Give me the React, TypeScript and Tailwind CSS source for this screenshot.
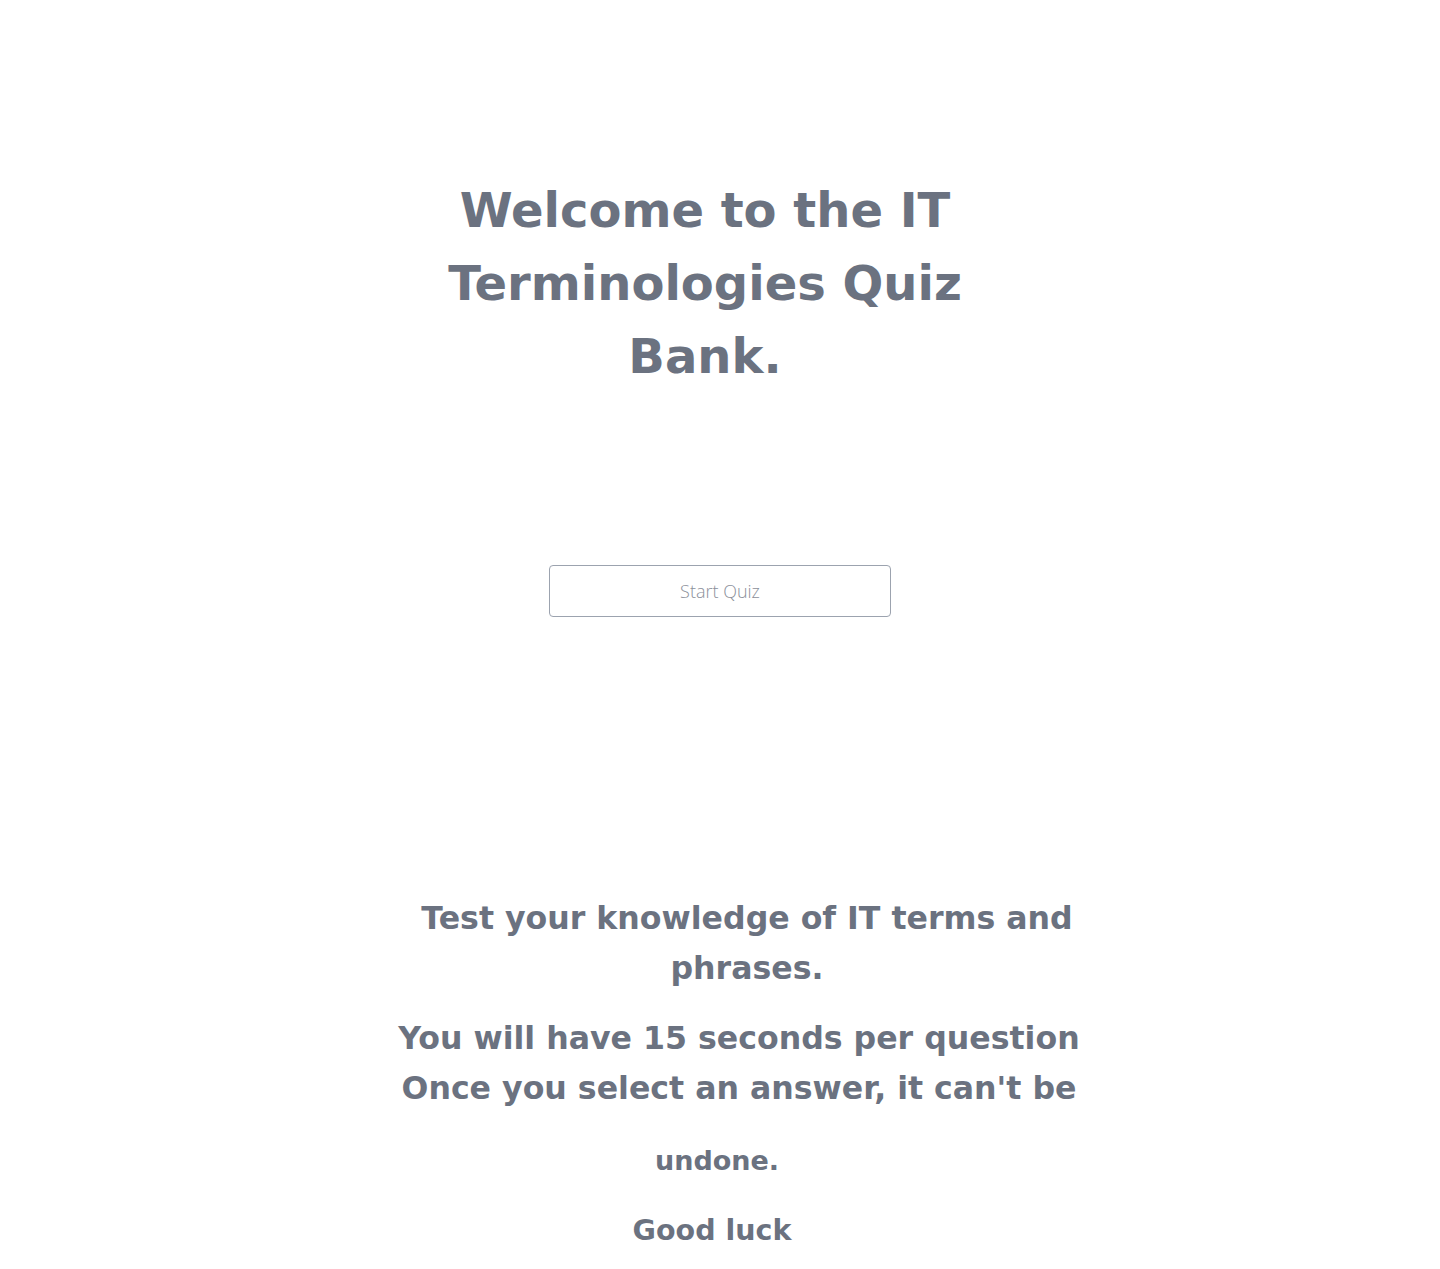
export default function App() {
  return (
    <div className="min-h-[1269px] w-full bg-white flex flex-col items-center text-[#6b7280] [font-family:'DejaVu_Sans',sans-serif]">
      <h1 className="mt-[174px] w-[540px] text-center text-[48px] leading-[73px] font-bold ml-[-30px]">
        Welcome to the IT Terminologies Quiz Bank.
      </h1>

      <button className="mt-[172px] w-[342px] h-[52px] border border-[#9ca3af] rounded-[4px] bg-white text-[18px] text-[#8b8f9a] font-light [font-family:'Open_Sans',sans-serif]">
        Start Quiz
      </button>

      <div className="mt-[276px] flex flex-col items-center font-bold text-[31.6px]">
        <p className="w-[700px] text-center leading-[50px] ml-[54px]">
          Test your knowledge of IT terms and phrases.
        </p>
        <p className="mt-[20px] w-[720px] text-center leading-[50px] ml-[38px]">
          You will have 15 seconds per question Once you select an answer, it can't be
        </p>
        <p className="mt-[23px] text-[27px] leading-[50px] ml-[-6px]">undone.</p>
        <p className="mt-[20px] text-[28.5px] leading-[50px] ml-[-16px]">Good luck</p>
      </div>
    </div>
  );
}
